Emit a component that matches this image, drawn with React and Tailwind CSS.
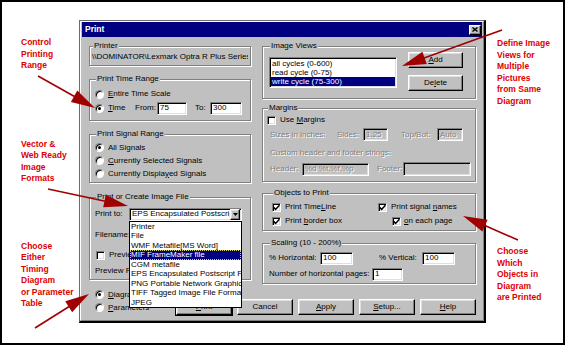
import React from 'react';

const sunken =
  'border border-t-[#808080] border-l-[#808080] border-r-white border-b-white shadow-[inset_1px_1px_0_#000,inset_-1px_-1px_0_#dfdfdf]';
const raised =
  'border border-t-white border-l-white border-r-black border-b-black shadow-[inset_-1px_-1px_0_#808080,inset_1px_1px_0_#dfdfdf]';
const dim = 'text-[#808080] [text-shadow:1px_1px_0_#fff]';

function Radio({ checked }) {
  return (
    <span className="w-[9px] h-[9px] shrink-0 rounded-full bg-white border border-t-[#808080] border-l-[#808080] border-r-white border-b-white shadow-[inset_1px_1px_0_#000] flex items-center justify-center">
      {checked && <span className="w-[3px] h-[3px] rounded-full bg-black" />}
    </span>
  );
}

function Check({ checked }) {
  return (
    <span className={`w-[9px] h-[9px] shrink-0 bg-white flex items-center justify-center ${sunken}`}>
      {checked && (
        <svg width="7" height="7" viewBox="0 0 7 7">
          <path d="M0.6 3.4 L2.6 5.4 L6.4 1.2" fill="none" stroke="#000" strokeWidth="1.5" />
        </svg>
      )}
    </span>
  );
}

function Btn({ children, className = '' }) {
  return (
    <div className={`h-[16px] bg-[#c0c0c0] flex items-center justify-center ${raised} ${className}`}>
      {children}
    </div>
  );
}

function Field({ value, className = '', disabled }) {
  return (
    <div
      className={`h-[13px] shrink-0 px-[2px] flex items-center overflow-hidden whitespace-nowrap ${sunken} ${
        disabled ? `bg-[#c0c0c0] ${dim}` : 'bg-white'
      } ${className}`}
    >
      {value}
    </div>
  );
}

function Group({ label, className = '', children }) {
  return (
    <fieldset className={`min-w-0 border border-[#808080] shadow-[inset_1px_1px_0_#fff,1px_1px_0_#fff] ${className}`}>
      <legend className="ml-[1px] px-[1px] h-[10px] leading-[10px] bg-[#c0c0c0]">{label}</legend>
      {children}
    </fieldset>
  );
}

function Arrow({ x1, y1, x2, y2 }) {
  const dx = x2 - x1;
  const dy = y2 - y1;
  const len = Math.hypot(dx, dy);
  const ux = dx / len;
  const uy = dy / len;
  const L = 24;
  const W = 6.5;
  const bx = x2 - ux * L;
  const by = y2 - uy * L;
  const pts = `${x2},${y2} ${bx - uy * W},${by + ux * W} ${bx + uy * W},${by - ux * W}`;
  return (
    <g>
      <line x1={x1} y1={y1} x2={bx + ux * 2} y2={by + uy * 2} stroke="#a00000" strokeWidth="1.6" />
      <polygon points={pts} fill="#a00000" />
    </g>
  );
}

const arrows = [
  [38, 76, 95, 108],
  [502, 30, 402, 66],
  [48, 189, 128, 206],
  [35, 328, 89, 294],
  [518, 240, 463, 216],
];

const formats = [
  'Printer',
  'File',
  'WMF Metafile[MS Word]',
  'MIF FrameMaker file',
  'CGM metafile',
  'EPS Encapsulated Postscript File',
  'PNG Portable Network Graphics',
  'TIFF Tagged Image File Format',
  'JPEG',
];

export default function App() {
  return (
    <div className="relative w-[565px] h-[345px] bg-white border-2 border-black flex font-['Liberation_Sans',Arial,sans-serif] overflow-hidden">
      {/* left notes */}
      <div className="w-[77px] shrink-0 pl-[19px] flex flex-col text-[#e00000] font-bold text-[8.5px] leading-[11.5px]">
        <div className="mt-[35px]">Control<br />Printing<br />Range</div>
        <div className="mt-[67px]">Vector &amp;<br />Web Ready<br />Image<br />Formats</div>
        <div className="mt-[56px]">Choose<br />Either<br />Timing<br />Diagram<br />or Parameter<br />Table</div>
      </div>

      {/* dialog */}
      <div className="mt-[18px] w-[407px] h-[303px] shrink-0 bg-[#c0c0c0] border-t border-l border-r-2 border-b-2 border-t-[#6b6b6b] border-l-[#6b6b6b] border-r-black border-b-black">
        <div className="h-full px-[1px] flex flex-col border border-t-white border-l-white border-r-[#808080] border-b-[#808080] text-[8px] text-black">
          <div className="h-[15px] shrink-0 bg-[#000080] flex items-center justify-between pl-[3px] pr-[1px]">
            <span className="text-white font-bold text-[8.5px]">Print</span>
            <div className={`w-[12px] h-[10px] bg-[#c0c0c0] flex items-center justify-center ${raised}`}>
              <svg width="6" height="5" viewBox="0 0 6 5">
                <path d="M0.5 0.5 L5.5 4.5 M5.5 0.5 L0.5 4.5" stroke="#000" strokeWidth="1.4" />
              </svg>
            </div>
          </div>

          <div className="flex-1 pl-[7px] pr-[6px] pt-[4px] flex flex-col">
            <div className="flex gap-[11px] items-start">
              {/* left column */}
              <div className="w-[162px] flex flex-col">
                <Group label="Printer" className="px-[2px] pt-[1px] pb-[3px]">
                  <div className="h-[10px] leading-[10px] whitespace-nowrap overflow-hidden">
                    \\DOMINATOR\Lexmark Optra R Plus Series
                  </div>
                </Group>

                <Group label="Print Time Range" className="mt-[8px] pl-[5px] pt-[3px] pb-[5px]">
                  <div className="h-[14px] flex items-center gap-[4px]">
                    <Radio />
                    <span><u>E</u>ntire Time Scale</span>
                  </div>
                  <div className="h-[14px] flex items-center">
                    <Radio checked />
                    <span className="ml-[4px] w-[27px]"><u>T</u>ime</span>
                    <span className="w-[22px]">From:</span>
                    <Field value="75" className="w-[30px]" />
                    <span className="ml-[8px] w-[15px]">To:</span>
                    <Field value="300" className="w-[32px]" />
                  </div>
                </Group>

                <Group label="Print Signal Range" className="mt-[8px] pl-[5px] pt-[2px] pb-[2px]">
                  <div className="h-[13px] flex items-center gap-[4px]">
                    <Radio checked />
                    <span>All Si<u>g</u>nals</span>
                  </div>
                  <div className="h-[13px] flex items-center gap-[4px]">
                    <Radio />
                    <span><u>C</u>urrently Selected Signals</span>
                  </div>
                  <div className="h-[13px] flex items-center gap-[4px]">
                    <Radio />
                    <span>Currently Displa<u>y</u>ed Signals</span>
                  </div>
                </Group>

                <Group label="Print or Create Image File" className="mt-[9px] pl-[5px] pt-[5px] pb-[1px]">
                  <div className="h-[14px] flex items-center">
                    <span className="w-[34px]">Print to:</span>
                    <div className="relative">
                      <div className={`w-[113px] h-[13px] bg-white flex items-center ${sunken}`}>
                        <span className="flex-1 pl-[2px] whitespace-nowrap overflow-hidden">EPS Encapsulated Postscript File</span>
                        <div className={`w-[10px] h-[11px] mr-[1px] bg-[#c0c0c0] flex items-center justify-center ${raised}`}>
                          <svg width="5" height="3" viewBox="0 0 5 3">
                            <polygon points="0,0 5,0 2.5,3" fill="#000" />
                          </svg>
                        </div>
                      </div>
                      <div className="absolute left-0 top-full z-10 w-[113px] bg-white border border-black">
                        {formats.map((f) => (
                          <div
                            key={f}
                            className={`h-[9.5px] leading-[9.5px] px-[1px] whitespace-nowrap overflow-hidden ${
                              f.startsWith('MIF')
                                ? 'bg-[#000080] text-white outline outline-1 outline-dotted outline-[#d8d860] -outline-offset-1'
                                : ''
                            }`}
                          >
                            {f}
                          </div>
                        ))}
                      </div>
                    </div>
                  </div>
                  <div className="mt-[7px] h-[14px] flex items-center">
                    <span className="w-[34px]">Filename:</span>
                    <Field value="" className="w-[113px]" />
                  </div>
                  <div className="mt-[6px] h-[14px] flex items-center gap-[4px]">
                    <span className="ml-[1px]"><Check /></span>
                    <span>Preview Image</span>
                  </div>
                  <div className="mt-[2px] h-[14px] flex items-center">
                    <span>Preview Resolution:</span>
                  </div>
                </Group>
              </div>

              {/* right column */}
              <div className="w-[214px] flex flex-col">
                <Group label="Image Views" className="pl-[6px] pt-[1px] pb-[7px]">
                  <div className="flex items-start">
                    <div className={`mt-[5px] w-[128px] h-[31px] bg-white p-[1px] ${sunken}`}>
                      <div className="h-[9px] leading-[9px] px-[1px]">all cycles (0-600)</div>
                      <div className="h-[9px] leading-[9px] px-[1px]">read cycle (0-75)</div>
                      <div className="h-[9px] leading-[9px] px-[1px] bg-[#000080] text-white">write cycle (75-300)</div>
                    </div>
                    <div className="ml-[11px] w-[55px] flex flex-col gap-[7px]">
                      <Btn className="h-[15px]"><u>A</u>dd</Btn>
                      <Btn className="h-[15px]">De<u>l</u>ete</Btn>
                    </div>
                  </div>
                </Group>

                <Group label="Margins" className="mt-[4px] pl-[4px] pt-[1px] pb-[5px]">
                  <div className="h-[12px] flex items-center gap-[4px]">
                    <Check />
                    <span>Use <u>M</u>argins</span>
                  </div>
                  <div className={`mt-[2px] h-[13px] pl-[3px] flex items-center ${dim}`}>
                    <span className="w-[67px]">Sizes in inches:</span>
                    <span className="w-[26px]">Sides:</span>
                    <Field value="1.25" disabled className="w-[25px]" />
                    <span className="ml-[13px] w-[36px]">Top/Bot:</span>
                    <Field value="Auto" disabled className="w-[26px]" />
                  </div>
                  <div className={`mt-[6px] h-[12px] pl-[3px] flex items-center ${dim}`}>
                    Custom header and footer strings:
                  </div>
                  <div className={`mt-[3px] h-[14px] pl-[3px] flex items-center ${dim}`}>
                    <span className="w-[32px]">Header:</span>
                    <Field value="%d %t,%f,%p" disabled className="w-[67px]" />
                    <span className="ml-[8px] w-[26px]">Footer:</span>
                    <Field value="" disabled className="w-[68px] h-[14px]" />
                  </div>
                </Group>

                <Group label="Objects to Print" className="mt-[6px] pl-[9px] pt-[2px] pb-[2px]">
                  <div className="h-[14px] flex items-center">
                    <div className="w-[106px] flex items-center gap-[4px]">
                      <Check checked />
                      <span>Print Time<u>L</u>ine</span>
                    </div>
                    <Check checked />
                    <span className="ml-[4px]">Print signal <u>n</u>ames</span>
                  </div>
                  <div className="h-[14px] flex items-center">
                    <div className="w-[120px] flex items-center gap-[4px]">
                      <Check checked />
                      <span>Print <u>b</u>order box</span>
                    </div>
                    <Check checked />
                    <span className="ml-[3px]"><u>o</u>n each page</span>
                  </div>
                </Group>

                <Group label="Scaling (10 - 200%)" className="mt-[7px] pl-[6px] pt-[3px] pb-[2px]">
                  <div className="h-[14px] flex items-center">
                    <span className="w-[51px]">% Horizontal:</span>
                    <Field value="100" className="w-[33px]" />
                    <span className="ml-[26px] w-[43px]">% Vertical:</span>
                    <Field value="100" className="w-[33px]" />
                  </div>
                  <div className="mt-[2px] h-[14px] flex items-center">
                    <span className="w-[103px]">Number of horizontal pages:</span>
                    <Field value="1" className="w-[31px]" />
                  </div>
                </Group>
              </div>
            </div>

            {/* bottom */}
            <div className="flex items-start">
              <div className="w-[88px] pl-[6px] pt-[4px] flex flex-col">
                <div className="h-[13px] flex items-center gap-[4px]">
                  <Radio checked />
                  <span><u>D</u>iagram</span>
                </div>
                <div className="h-[13px] flex items-center gap-[4px]">
                  <Radio />
                  <span><u>P</u>arameters</span>
                </div>
              </div>
              <div className="mt-[15px] flex gap-[5px]">
                <Btn className="w-[56px] outline outline-1 outline-black"><u>P</u>rint</Btn>
                <Btn className="w-[56px]">Cancel</Btn>
                <Btn className="w-[56px]"><u>A</u>pply</Btn>
                <Btn className="w-[56px]"><u>S</u>etup...</Btn>
                <Btn className="w-[56px]"><u>H</u>elp</Btn>
              </div>
            </div>
          </div>
        </div>
      </div>

      {/* right notes */}
      <div className="pl-[11px] flex flex-col text-[#e00000] font-bold text-[8.5px] leading-[11.5px]">
        <div className="mt-[36px]">Define Image<br />Views for<br />Multiple<br />Pictures<br />from Same<br />Diagram</div>
        <div className="mt-[139px]">Choose<br />Which<br />Objects in<br />Diagram<br />are Printed</div>
      </div>

      <svg className="absolute left-[-2px] top-[-2px] pointer-events-none" width="565" height="345" viewBox="0 0 565 345">
        {arrows.map(([x1, y1, x2, y2], i) => (
          <Arrow key={i} x1={x1} y1={y1} x2={x2} y2={y2} />
        ))}
      </svg>
    </div>
  );
}
